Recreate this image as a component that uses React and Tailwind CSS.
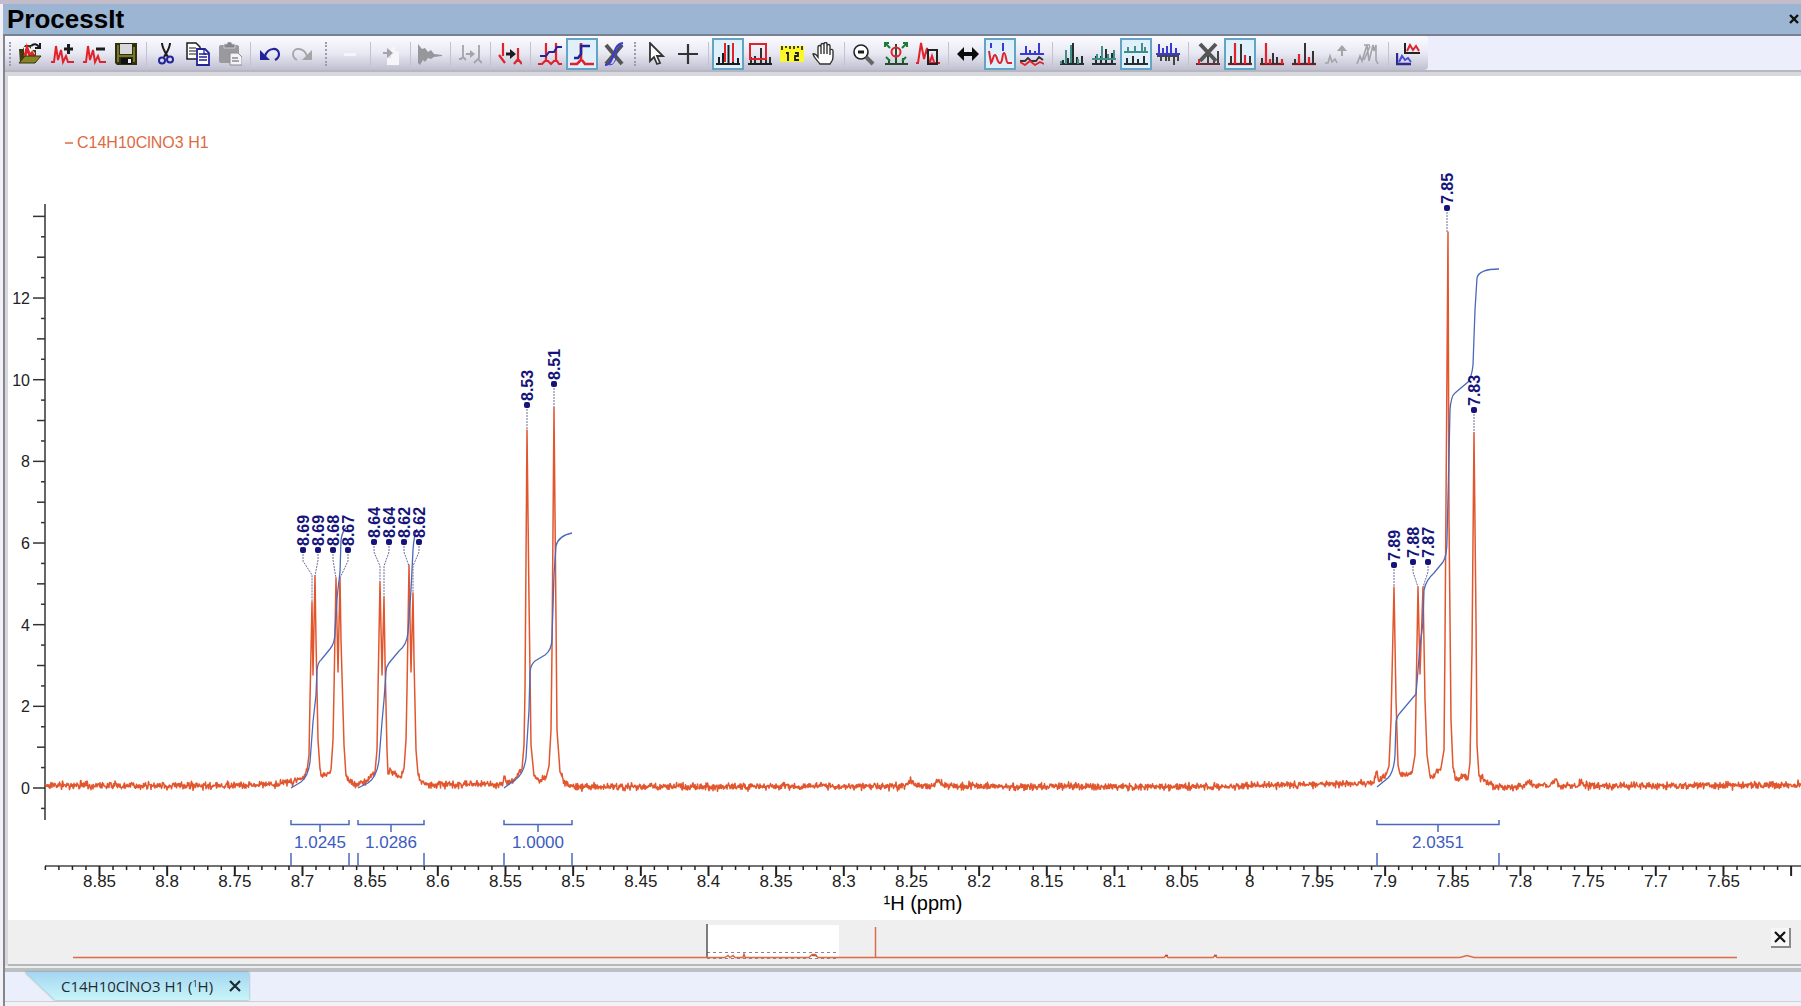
import React from "react";

const RED = "#e0222c";
const NAVY = "#23239c";
const TEAL = "#3f8f88";
const INK = "#1c1c1c";
const GREY = "#a3a3a8";

const Icon = ({ children }) => (
  <svg className="h-6 w-6" viewBox="0 0 24 24" fill="none" aria-hidden="true">
    {children}
  </svg>
);

const P = ({ d, c = INK, w = 2, ...rest }) => (
  <path d={d} stroke={c} strokeWidth={w} {...rest} />
);

const icons = {
  open: (
    <>
      <path d="M1 7h4l2-4h6v5h5v13H2z" fill="#3c3c10" />
      <path d="M6 5h5l6 6v5H6z" fill="#fff" />
      <P d="M7 14 9 6l3 8 2-3 3 4" c={RED} w={3} />
      <path d="M1 21 7 14h16l-6 7z" fill="#858526" stroke="#33330a" />
      <P d="M13 4c3-3 6-2 8 1M22 1v5h-5" w={2} />
    </>
  ),
  addPeak: (
    <>
      <P d="M1 20h3L6 4l2 14 3-10 2 12 3-6 2 6h6" c={RED} w={2} />
      <P d="M14 7h9M18.500 2v10" w={3} />
    </>
  ),
  removePeak: (
    <>
      <P d="M1 20h3L6 4l2 14 3-10 2 12 3-6 2 6h6" c={RED} w={2} />
      <P d="M14 7h9" w={3} />
    </>
  ),
  save: (
    <>
      <path d="M1 1h22v22H3l-2-2z" fill="#30300f" />
      <path d="M3 3h2v17H3zM19 5h2v15h-2zM5 13h14v2H5z" fill="#76762c" />
      <path d="M6 2h12v10H6z" fill="#d8d8dc" />
      <path d="M7 16h11v6H7z" fill="#111" />
      <path d="M14 17h3v4h-3z" fill="#eee" />
    </>
  ),
  cut: (
    <>
      <P d="M8 1c0 5 3 9 6 14M16 1c0 5-3 9-6 14" w={2} />
      <circle cx="8" cy="18.500" r="3" stroke={NAVY} strokeWidth="2" />
      <circle cx="16" cy="17.500" r="3" stroke={NAVY} strokeWidth="2" />
    </>
  ),
  copy: (
    <>
      <path d="M1 1h9l4 4v12H1z" fill="#fff" stroke={INK} strokeWidth="1.500" />
      <P d="M3 6h7M3 9h7M3 12h7" w={1} />
      <path d="M11 7h8l4 4v12H11z" fill="#fff" stroke={NAVY} strokeWidth="1.800" />
      <P d="M13 12h7M13 15h8M13 18h8" c={NAVY} w={1.3} />
      <P d="M18 7v5h5" c={NAVY} w={1.3} />
    </>
  ),
  paste: (
    <>
      <rect x="1" y="3" width="20" height="18" rx="2" fill="#9a9a9e" />
      <path d="M6 2h3c0-3 5-3 5 0h3v4H6z" fill="#85858a" stroke="#d8d8de" strokeWidth="0.800" />
      <path d="M12 11h8l4 4v8H12z" fill="#f4f4f6" stroke="#8a8a90" />
      <P d="M14 16h6M14 19h7" c="#8a8a90" w={1.3} />
    </>
  ),
  undo: (
    <>
      <P d="M7 14c3-9 14-9 14-2 0 3-2 5-4 6" c={NAVY} w={2.2} />
      <path d="M2 8v10h10z" fill={NAVY} />
    </>
  ),
  redo: (
    <>
      <P d="M17 14c-3-9-14-9-14-2 0 3 2 5 4 6" c={GREY} w={1.8} />
      <path d="M22 8v10H12z" fill={GREY} />
    </>
  ),
  blank: <path d="M6 11h12v3H6z" fill="#f4f4fa" />,
  insert: (
    <>
      <path d="M13 5h4v4h4v14H9v-7h4z" fill="#f6f6fa" />
      <P d="M5 11h5" c={GREY} w={2} />
      <path d="M9 6l6 5-6 5z" fill={GREY} />
    </>
  ),
  fid: (
    <path d="M0 2l4 5 3-1 3 4 3-2 3 4 8 1v1l-8 1-3 2-3-1-3 4-2-2-3 5-2-2z" fill="#97979b" />
  ),
  shift: (
    <>
      <P d="M1 17h2l2-2V3M5 15l3 3M16 21l4-4 4 4M21 3v14" c={GREY} w={1.8} />
      <P d="M8 12h6" c={GREY} w={2} />
      <path d="M12 8l5 4-5 4z" fill={GREY} />
    </>
  ),
  shiftRed: (
    <>
      <P d="M5 1v13M1 13l6 8M20 6v14M16 22l4-5 4 5" c={RED} w={2.2} />
      <path d="M8 10.500h4V7l6 5-6 5v-3.500H8z" fill={INK} />
    </>
  ),
  integralPair: (
    <>
      <P d="M0 22h4l3-3h3l3 3 3-3h3l2 3h3M8 19V1M18 19V1" c={RED} w={2.2} />
      <P d="M2 14h6l3-4h5l3-5h5" c={NAVY} w={2} />
    </>
  ),
  integral: (
    <>
      <P d="M0 22h7l4-4V1M12 18l3 4h9" c={RED} w={2.6} />
      <P d="M4 16h4l3-4V4h9" c={NAVY} w={2.4} />
    </>
  ),
  integralOff: (
    <>
      <P d="M4 3l16 19M20 3 4 22" c="#555" w={4} />
      <P d="M3 23c11 0 5-20 18-22" c="#3a3ad0" w={2} />
      <P d="M7 23c11 0 4-18 14-20" c="#3a3ad0" w={1} />
    </>
  ),
  pointer: (
    <path d="M6 1v18l4-4 3 7 3-1-3-7h6z" fill="#fff" stroke="#333" strokeWidth="1.800" />
  ),
  cross: <P d="M2 12h20M12 2v20" c="#333" w={2.2} />,
  peaksIn: (
    <>
      <P d="M0 22h24M3 22v-7M7 22V11M12.500 22V3M17 22v-9M22 22v-6" w={2} />
      <P d="M9 1v19M17 1v19" c={RED} w={2} />
    </>
  ),
  peaksBox: (
    <>
      <P d="M0 22h24M3 22v-7M7 22v-8M13 22V6M18 22v-6M22 22v-7" w={1.8} />
      <rect x="2" y="2" width="16" height="15" stroke={RED} strokeWidth="2" />
    </>
  ),
  ruler: (
    <>
      <rect y="4" width="24" height="16" fill="#fcf72b" />
      <P d="M2 4v4M6 4v2M10 4v3M14 4v3M18 4v2M22 4v4" w={1.6} />
      <P d="M6 11h2v8M15 11h3v3h-3v4h4" w={1.8} />
    </>
  ),
  hand: (
    <path
      d="M8 22C5 18 2 16 1 12c2-1 3 0 5 3V5c0-2 3-2 3 0V3c0-2 3-2 3 0V2c0-2 3-2 3 0v2c0-2 3-2 3 0v4c1-1 3-1 3 1v6c0 4-2 5-3 7zM9 4v8M12 3v9M15 4v8M18 6v7"
      fill="#fff"
      stroke="#333"
      strokeWidth="1.400"
    />
  ),
  zoomOut: (
    <>
      <circle cx="9" cy="10" r="7" fill="#fff" stroke="#222" strokeWidth="1.600" />
      <P d="M6 10h6" w={3} />
      <P d="M14 15l7 7" c="#666" w={4} />
    </>
  ),
  fit: (
    <>
      <P d="M1 22h23M5 22v-5M12 22V2M19 22v-6" c="#234d2b" w={2} />
      <circle cx="12" cy="10" r="4.500" stroke={RED} strokeWidth="2" />
      <P d="M1 5V1h4M1 1l5 5M19 1h4v4M23 1l-5 5M2 15l4 4M22 15l-4 4" c="#1e7b34" w={2} />
    </>
  ),
  peakZoom: (
    <>
      <P d="M0 21h2L5 1l3 16 3-11 2 15h11" c={RED} w={2} />
      <rect x="12" y="8" width="9" height="14" stroke="#222" strokeWidth="2" />
      <P d="M14 20l2-6 2 6" c={RED} />
    </>
  ),
  stretch: <path d="M1 12l7-7v5h8V5l7 7-7 7v-5H8v5z" fill="#0b0b0b" />,
  pickPeaks: (
    <>
      <P d="M1 9l2 12c2-2 2-8 4-8s2 8 5 8 2-10 4-10 2 10 4 10h4" c={RED} w={2} />
      <P d="M3 1v5M15 1v8" c="#3a3ad0" w={2} />
    </>
  ),
  multi: (
    <>
      <P d="M0 12h24M6 12V4M10 12V8M19 12V1M15 12V9" c="#3a3ad0" w={2} />
      <P d="M0 19h5l3-3 3 3h5l3-4 4 3" c="#333" w={1.8} />
      <P d="M0 20l5 3 5-4 5 4 5-3 4 2" c={RED} w={1.8} />
    </>
  ),
  tealStack: (
    <>
      <P d="M0 22h24M3 22v-4M8 22v-6M13 22V1M17 22v-7M22 22v-8" c="#252f2f" w={2} />
      <P d="M1 19v3M6 8v14M11 3v18M18 17v5" c={TEAL} w={2} />
    </>
  ),
  tealOverlay: (
    <>
      <P d="M0 22h24M4 22v-8M9 22v-8M14 22V7M20 22V11" c="#252f2f" w={2} />
      <P d="M0 17h24M5 17v-5M10 17V4M16 17v-5M22 17V8" c={TEAL} w={2} />
    </>
  ),
  tealSplit: (
    <>
      <P d="M0 10h24M4 10V5M11 10V4M18 10V1M21 10V5" c={TEAL} w={2} />
      <P d="M0 22h24M3 22v-6M9 22v-8M14 22v-5M20 22v-8" c="#252f2f" w={2} />
    </>
  ),
  mirror: (
    <>
      <P d="M0 12h24M3 12V2M7 12V6M11 12V4M15 12V1M20 12V6" c="#3a3ad0" w={2} />
      <P d="M1 14h22M5 14v5M10 14v5M13 14v5M18 14v9M22 14v5" c="#444" w={2} />
    </>
  ),
  peaksOff: (
    <>
      <P d="M0 22h24" c="#6b2a2e" w={2} />
      <P d="M3 22v-5" c={RED} w={2} />
      <P d="M12 22V8M18 22v-7M22 22V9" c="#444" w={2} />
      <P d="M4 2l16 17M20 2 4 19" c="#555" w={4} />
    </>
  ),
  bars: (
    <>
      <P d="M0 22h24" c="#7a1a20" w={2.2} />
      <P d="M3 22v-8M13 22V2M22 22v-8" c="#333" w={2} />
      <P d="M7 22V1M17 22v-9" c={RED} w={2.2} />
    </>
  ),
  barsDown: (
    <>
      <P d="M0 22h24" c="#7a1a20" w={2.2} />
      <P d="M2 22v-6M13 22V11M17 22v-7" c="#333" w={2} />
      <P d="M6 22V1M10 22v-5M22 22v-5" c={RED} w={2.2} />
    </>
  ),
  barsUp: (
    <>
      <P d="M0 22h24" c="#7a1a20" w={2.2} />
      <P d="M3 22v-5M13 22V1M21 22V9" c="#333" w={2} />
      <P d="M7 22V12M17 22v-7" c={RED} w={2.2} />
    </>
  ),
  raise: (
    <>
      <P d="M1 21h3l2-7 2 6 3-3 2 4" c={GREY} w={1.6} />
      <P d="M18 14V5" c={GREY} w={2} />
      <path d="M13 9l5-6 5 6z" fill={GREY} />
    </>
  ),
  compare: (
    <P d="M1 22l3-8 2 5L11 3l2 16 4-16 1 6 2-6v15l2 4M8 3h6M8 18l6-14" c={GREY} w={1.6} />
  ),
  report: (
    <>
      <P d="M9 1v10h15" c="#222" w={2} />
      <P d="M11 9l3-6 3 5 3-4 3 5" c={RED} w={2} />
      <P d="M1 11v11h14" c="#2c2c90" w={2.4} />
      <P d="M3 20l3-6 3 4 3-2 3 4" c="#4a4ad8" w={2} />
    </>
  ),
};

// one array per toolbar band, "|" is a separator
const bands = [
  [
    ["open", "Open"], ["addPeak", "Add spectrum"], ["removePeak", "Remove spectrum"], ["save", "Save"], "|",
    ["cut", "Cut"], ["copy", "Copy"], ["paste", "Paste"], "|",
    ["undo", "Undo"], ["redo", "Redo"],
  ],
  [
    ["blank", "Clear"], "|",
    ["insert", "Insert"], "|",
    ["fid", "FID"], "|",
    ["shift", "Shift"], "|",
    ["shiftRed", "Shift peaks"], "|",
    ["integralPair", "Integrate range"], ["integral", "Integral", true], ["integralOff", "Clear integrals"],
  ],
  [
    ["pointer", "Select"], ["cross", "Crosshair"], "|",
    ["peaksIn", "Zoom horizontally", true], ["peaksBox", "Zoom box"], ["ruler", "Ruler"], ["hand", "Pan"], "|",
    ["zoomOut", "Zoom out"], ["fit", "Fit"], ["peakZoom", "Zoom to peak"], "|",
    ["stretch", "Full width"], ["pickPeaks", "Pick peaks", true], ["multi", "Multiplets"], "|",
    ["tealStack", "Stack"], ["tealOverlay", "Overlay"], ["tealSplit", "Split", true], ["mirror", "Mirror"], "|",
    ["peaksOff", "Hide peaks"], ["bars", "All peaks", true], ["barsDown", "Smaller peaks"], ["barsUp", "Larger peaks"],
    ["raise", "Raise"], ["compare", "Compare"], "|",
    ["report", "Report"],
  ],
];

const gripWidths = ["w-[9px]", "w-4", "w-[10px]"];

const Toolbar = () => (
  <div className="flex items-stretch overflow-hidden border-b-2 border-[#b6b7c0] bg-[#eceffb]">
    <div className="flex shrink-0 rounded-r bg-gradient-to-b from-[#fbfbff] via-[#e9e9f4] to-[#bfbfd0] pr-1 pt-[2px]">
      {bands.map((tools, b) => (
        <div key={b} className="flex shrink-0">
          <span className={`flex shrink-0 justify-center ${gripWidths[b]}`}>
            <span className="my-1 border-l-2 border-dotted border-[#9d9da9]" />
          </span>
          {tools.map((tool, i) => {
            if (tool === "|")
              return (
                <span key={i} className="flex w-2 shrink-0 justify-center">
                  <span className="my-1 w-px bg-[#c3c3d0]" />
                </span>
              );
            const [name, label, active] = tool;
            return (
              <button
                key={i}
                type="button"
                aria-label={label}
                className={
                  active
                    ? "flex h-8 w-8 shrink-0 items-center justify-center border-2 border-[#62a3c6] bg-[#dff0fb]"
                    : "flex h-8 w-8 shrink-0 items-center justify-center"
                }
              >
                <Icon>{icons[name]}</Icon>
              </button>
            );
          })}
        </div>
      ))}
    </div>
  </div>
);

const ppmX = (ppm) => 99.5 + (8.85 - ppm) * 1353.3;
const valY = (v) => 788 - v * 40.83;

// spectrum outline, noise is added where the curve is flat
const outline = [
  [45, 785], [200, 786], [280, 784], [292, 782], [301, 779], [307, 771], [309, 755], [310, 700], [312, 602],
  [313, 675], [315, 576], [316, 640], [318, 740], [320, 769], [321, 776], [328, 773], [331, 770], [333, 740], [334, 690],
  [336, 578], [338, 672], [340, 578], [341, 640], [344, 745], [346, 776], [351, 782], [358, 784], [367, 780],
  [375, 772], [377, 750], [378, 690], [380, 582], [382, 675], [384, 597], [385, 660], [387, 750], [388, 774], [391, 770], [394, 774],
  [400, 777], [404, 769], [406, 740], [407, 690], [409, 565], [411, 672], [413, 593], [414, 660], [416, 750], [418, 774], [422, 782], [427, 785],
  [502, 784], [504, 776], [506, 782], [515, 779], [522, 769], [524, 745], [525, 690], [527, 430], [529, 600], [531, 745],
  [534, 776], [539, 781], [546, 778], [549, 766], [551, 730], [552, 650], [554, 408], [556, 620], [557, 730], [560, 772], [564, 783], [572, 786],
  [600, 787], [905, 786], [911, 780], [916, 786], [932, 786], [938, 780], [943, 786], [1200, 787], [1374, 783], [1376, 772], [1379, 780],
  [1386, 775], [1389, 766], [1391, 720], [1394, 587], [1396, 700], [1398, 765], [1400, 774], [1412, 773], [1415, 755], [1416, 700], [1418, 587],
  [1420, 674], [1423, 587], [1425, 700], [1427, 755], [1430, 776], [1435, 774], [1441, 768], [1444, 750], [1445, 640], [1448, 232],
  [1449, 520], [1451, 720], [1453, 768], [1456, 780], [1463, 775], [1468, 779], [1470, 762], [1472, 650], [1474, 433], [1476, 620], [1477, 745],
  [1479, 776], [1488, 783], [1494, 787], [1523, 787], [1528, 781], [1533, 786], [1550, 786], [1555, 779], [1559, 786], [1578, 786],
  [1581, 781], [1584, 786], [1801, 785],
];

const buildTrace = () => {
  let seed = 7;
  const rand = () => {
    seed = (seed * 16807) % 2147483647;
    return seed / 2147483647 - 0.5;
  };
  const pts = [];
  for (let i = 0; i < outline.length - 1; i++) {
    const [x0, y0] = outline[i];
    const [x1, y1] = outline[i + 1];
    pts.push(`${x0},${y0}`);
    if (Math.min(y0, y1) < 768) continue;
    for (let x = x0 + 0.5; x < x1; x += 0.5) {
      const y = y0 + ((y1 - y0) * (x - x0)) / (x1 - x0) + (rand() + rand() + rand()) * 3.6;
      pts.push(`${x},${y.toFixed(1)}`);
    }
  }
  pts.push("1801,785");
  return pts.join(" ");
};

const trace = buildTrace();

const peaks = [
  { label: "8.69", x: 303, y: 550, leader: "303,554 303,561 312,575 312,602" },
  { label: "8.69", x: 318, y: 550, leader: "318,554 318,560 315,576" },
  { label: "8.68", x: 333, y: 550, leader: "333,554 333,560 336,578" },
  { label: "8.67", x: 348, y: 550, leader: "348,554 348,561 340,578" },
  { label: "8.64", x: 374, y: 542, leader: "374,546 374,552 380,566 380,582" },
  { label: "8.64", x: 389, y: 542, leader: "389,546 389,552 384,566 384,597" },
  { label: "8.62", x: 404, y: 542, leader: "404,546 404,552 409,566" },
  { label: "8.62", x: 419, y: 542, leader: "419,546 419,552 413,566 413,593" },
  { label: "8.53", x: 527, y: 405, leader: "527,409 527,430" },
  { label: "8.51", x: 554, y: 384, leader: "554,388 554,408" },
  { label: "7.89", x: 1394, y: 565, leader: "1394,569 1394,587" },
  { label: "7.88", x: 1413, y: 562, leader: "1413,566 1413,572 1418,587" },
  { label: "7.87", x: 1428, y: 562, leader: "1428,566 1428,572 1423,587" },
  { label: "7.85", x: 1447, y: 208, leader: "1447,212 1447,232" },
  { label: "7.83", x: 1474, y: 410, leader: "1474,414 1474,433" },
];

const integrals = [
  {
    label: "1.0245", from: 291, to: 349,
    d: "M291 788 301 782Q308 777 310 762L313 722 316 695 317 670Q318 662 321 660L330 649Q335 643 335 632L337 598 340 572 341 540Q342 532 346 528",
  },
  {
    label: "1.0286", from: 358, to: 424,
    d: "M358 788 368 783Q377 777 379 760L382 722 384 700 386 672Q386 667 389 663L399 651Q407 645 408 632L411 590 413 550Q414 535 417 529",
  },
  {
    label: "1.0000", from: 504, to: 572,
    d: "M504 788 515 780Q524 774 526 758L529 710 530 672Q531 664 535 661L545 655Q552 650 552 638L554 575 556 546Q558 536 572 533",
  },
  {
    label: "2.0351", from: 1377, to: 1499,
    d: "M1377 787 1388 778Q1394 772 1395 755L1396 722Q1397 716 1400 713L1416 694 1420 646 1423 622 1424 590Q1426 580 1434 573L1443 562Q1447 556 1447 540L1449 455 1450 410Q1451 396 1455 393L1468 382Q1472 376 1473 365L1475 310 1477 278Q1479 269 1499 269",
  },
];

const range = (n) => Array.from({ length: n }, (_, i) => i);

const Spectrum = () => (
  <svg
    className="block h-auto w-full bg-white font-['Liberation_Sans',Arial,sans-serif]"
    viewBox="8 76 1793 844"
    role="img"
    aria-label="Proton NMR spectrum"
  >
    <path d="M65 143h8" stroke="#dd6a42" strokeWidth="1.5" />
    <text x="77" y="148" className="fill-[#dd6a42] text-[16px]">
      C14H10ClNO3 H1
    </text>

    {/* intensity axis */}
    <path d="M45 204V820" stroke="#333" strokeWidth="1.5" />
    {range(30).map((i) => {
      const v = i / 2 - 0.5;
      const len = v % 2 === 0 ? 12 : v % 1 === 0 ? 8 : 4;
      return <path key={i} d={`M45 ${valY(v)}h${-len}`} stroke="#333" strokeWidth="1.5" />;
    })}
    {range(7).map((i) => (
      <text key={i} x="30" y={valY(i * 2) + 6} textAnchor="end" className="fill-[#222] text-[16px]">
        {i * 2}
      </text>
    ))}

    {/* ppm axis */}
    <path d="M45 866H1801" stroke="#444" strokeWidth="1.5" />
    {range(130).map((i) => {
      const major = i % 5 === 4;
      return (
        <path
          key={i}
          d={`M${ppmX(8.89 - i * 0.01)} 866v${major ? 10 : 4}`}
          stroke="#222"
          strokeWidth={major ? 2 : 1.5}
        />
      );
    })}
    {range(25).map((i) => {
      const ppm = Math.round((8.85 - i * 0.05) * 100) / 100;
      return (
        <text key={i} x={ppmX(ppm)} y="887" textAnchor="middle" className="fill-[#222] text-[17px]">
          {ppm}
        </text>
      );
    })}
    <text x="923" y="910" textAnchor="middle" className="fill-black text-[20px]">
      ¹H (ppm)
    </text>

    <polyline points={trace} fill="none" stroke="#e2562e" strokeWidth="1.5" strokeLinejoin="round" />

    {integrals.map(({ label, from, to, d }) => {
      const mid = (from + to) / 2;
      return (
        <g key={label} fill="none" stroke="#4a69bd" strokeWidth="1.5">
          <path d={d} strokeWidth="1.3" />
          <path d={`M${from} 820v4.500H${to}V820M${mid} 825v7M${from} 853v13M${to} 853v13`} />
          <text x={mid} y="848" textAnchor="middle" stroke="none" className="fill-[#3d5cc0] text-[17px]">
            {label}
          </text>
        </g>
      );
    })}

    {peaks.map(({ label, x, y, leader }) => (
      <g key={x}>
        <polyline points={leader} fill="none" stroke="#6c6c9c" strokeDasharray="2 1" />
        <rect x={x - 3} y={y - 3} width="6" height="6" rx="2" fill="#14147a" />
        <text
          transform={`translate(${x + 6} ${y - 4}) rotate(-90)`}
          className="fill-[#14147a] text-[16px] font-bold"
        >
          {label}
        </text>
      </g>
    ))}
  </svg>
);

const Overview = () => (
  <div className="relative border-b-2 border-[#b4b7bb] bg-[#efefef]">
    <svg className="block h-auto w-full" viewBox="8 920 1793 44" role="img" aria-label="Spectrum overview">
      <rect x="707" y="925" width="132" height="33" fill="#fff" />
      <path d="M707 952.500H839M707 958.500H839" stroke="#888" strokeDasharray="3 3" />
      <path d="M707 924v34" stroke="#555" strokeWidth="1.5" />
      <path
        d="M73 957.500H725l3-2 2 2 3-2 2 2h8l1-4 1 4h64l3-3 3 0 3 3H1164l2-2 2 2h45l2-2 2 2h243l7-2 7 2H1737"
        fill="none"
        stroke="#dc6b4c"
        strokeWidth="1.5"
      />
      <path d="M875.500 927v30" stroke="#dc6b4c" strokeWidth="1.5" />
      <path d="M1165 955.500h3M1214 955.500h3M812 955.500h5" stroke="#c4512f" strokeWidth="1.5" />
    </svg>
    <button
      type="button"
      aria-label="Close overview"
      className="absolute right-[10px] top-2 flex h-5 w-5 items-center justify-center border-b-2 border-r-2 border-[#8a8a8a] bg-[#f6f6f6]"
    >
      <svg className="h-3 w-3" viewBox="0 0 12 12" aria-hidden="true">
        <path d="M1 1l10 10M11 1L1 11" stroke="#111" strokeWidth="2.2" />
      </svg>
    </button>
  </div>
);

const TabBar = () => (
  <div className="flex h-[30px] items-start border-b border-[#cfcfd6] bg-[#ebeefb] pl-5">
    <div className="[filter:drop-shadow(0_0_1px_#6d9aa8)]">
      <div className="flex h-7 items-center gap-4 bg-gradient-to-b from-[#a5d6f1] to-[#c8f5f8] pl-9 pr-2 [clip-path:polygon(0_0,100%_0,100%_100%,30px_100%)]">
        <button
          type="button"
          className="font-['Open_Sans','Noto_Sans',sans-serif] text-[15px] text-[#1d2b33]"
        >
          C14H10ClNO3 H1 (<sup className="text-[9px]">1</sup>H)
        </button>
        <button type="button" aria-label="Close tab">
          <svg className="h-3 w-3" viewBox="0 0 12 12" aria-hidden="true">
            <path d="M1 1l10 10M11 1L1 11" stroke="#1b2a30" strokeWidth="2.2" />
          </svg>
        </button>
      </div>
    </div>
  </div>
);

const App = () => {
  return (
    <div className="flex min-h-screen flex-col overflow-hidden border-t-4 border-[#c3bccb] bg-[#f1f1f6] pl-[3px] font-['Liberation_Sans',Arial,sans-serif]">
      <header className="flex h-8 items-center justify-between border-b-2 border-[#78818f] bg-[#9bb5d2] pl-1">
        <h1 className="text-[26px] font-bold leading-8 text-black">ProcessIt</h1>
        <button type="button" aria-label="Close panel" className="pr-[2px]">
          <svg className="h-[10px] w-[10px]" viewBox="0 0 10 10" aria-hidden="true">
            <path d="M1 1l8 8M9 1L1 9" stroke="#111" strokeWidth="2.400" />
          </svg>
        </button>
      </header>
      <main className="flex flex-1 flex-col border-l-2 border-[#85858f]">
        <Toolbar />
        <div className="border-l-[3px] border-t-4 border-[#d6d8de]">
          <Spectrum />
          <Overview />
        </div>
        <div className="border-b-4 border-t-2 border-b-[#bcc0c2] border-t-[#eceeee]" />
        <TabBar />
      </main>
    </div>
  );
};

export default App;
